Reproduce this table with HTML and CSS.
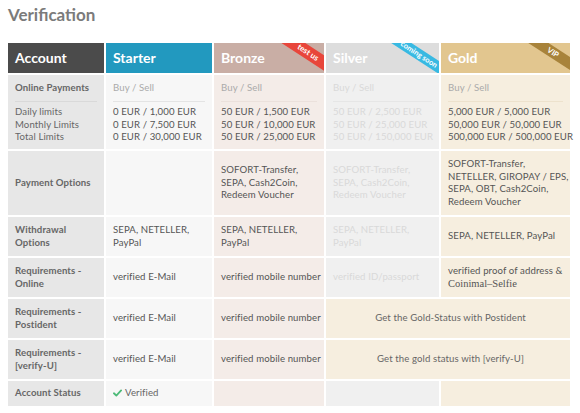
FILE: index.html
```html
<!DOCTYPE html>
<html lang="en">
<head>
<meta charset="utf-8">
<title>Verification</title>
<link rel="stylesheet" href="styles.css">
</head>
<body>
<h1 class="title">Verification</h1>
<table class="levels">
  <colgroup>
    <col class="c-account">
    <col class="c-starter">
    <col class="c-bronze">
    <col class="c-silver">
    <col class="c-gold">
  </colgroup>
  <thead>
    <tr class="row-head">
      <th class="h-account">Account</th>
      <th class="h-starter">Starter</th>
      <th class="h-bronze">Bronze<span class="ribbon r-red">test us</span></th>
      <th class="h-silver">Silver<span class="ribbon r-cyan">coming soon</span></th>
      <th class="h-gold">Gold<span class="ribbon r-brown">VIP</span></th>
    </tr>
  </thead>
  <tbody>
    <tr class="row-limits">
      <td class="label">
        <div class="top">Online Payments</div>
        <div class="lines plain">Daily limits<br>Monthly Limits<br>Total Limits</div>
      </td>
      <td class="starter">
        <div class="top muted">Buy / Sell</div>
        <div class="lines">0 EUR / 1,000 EUR<br>0 EUR / 7,500 EUR<br>0 EUR / 30,000 EUR</div>
      </td>
      <td class="bronze">
        <div class="top muted">Buy / Sell</div>
        <div class="lines">50 EUR / 1,500 EUR<br>50 EUR / 10,000 EUR<br>50 EUR / 25,000 EUR</div>
      </td>
      <td class="silver">
        <div class="top">Buy / Sell</div>
        <div class="lines">50 EUR / 2,500 EUR<br>50 EUR / 25,000 EUR<br>50 EUR / 150,000 EUR</div>
      </td>
      <td class="gold">
        <div class="top muted">Buy / Sell</div>
        <div class="lines">5,000 EUR / 5,000 EUR<br>50,000 EUR / 50,000 EUR<br>500,000 EUR / 500,000 EUR</div>
      </td>
    </tr>
    <tr class="row-pay">
      <td class="label">Payment Options</td>
      <td class="starter"></td>
      <td class="bronze">SOFORT-Transfer,<br>SEPA, Cash2Coin,<br>Redeem Voucher</td>
      <td class="silver">SOFORT-Transfer,<br>SEPA, Cash2Coin,<br>Redeem Voucher</td>
      <td class="gold">SOFORT-Transfer,<br>NETELLER, GIROPAY / EPS,<br>SEPA, OBT, Cash2Coin,<br>Redeem Voucher</td>
    </tr>
    <tr class="row-std">
      <td class="label">Withdrawal<br>Options</td>
      <td class="starter">SEPA, NETELLER,<br>PayPal</td>
      <td class="bronze">SEPA, NETELLER,<br>PayPal</td>
      <td class="silver">SEPA, NETELLER,<br>PayPal</td>
      <td class="gold">SEPA, NETELLER, PayPal</td>
    </tr>
    <tr class="row-std">
      <td class="label">Requirements -<br>Online</td>
      <td class="starter">verified E-Mail</td>
      <td class="bronze">verified mobile number</td>
      <td class="silver">verified ID/passport</td>
      <td class="gold">verified proof of address &amp;<br><span class="serif">Coinimal–Selfie</span></td>
    </tr>
    <tr class="row-std">
      <td class="label">Requirements -<br>Postident</td>
      <td class="starter">verified E-Mail</td>
      <td class="bronze">verified mobile number</td>
      <td class="gold merged" colspan="2">Get the Gold-Status with Postident</td>
    </tr>
    <tr class="row-std">
      <td class="label">Requirements -<br>[verify-U]</td>
      <td class="starter">verified E-Mail</td>
      <td class="bronze">verified mobile number</td>
      <td class="gold merged" colspan="2">Get the gold status with [verify-U]</td>
    </tr>
    <tr class="row-status">
      <td class="label">Account Status</td>
      <td class="starter"><span class="status"><svg class="check" viewBox="0 0 10 8" width="9" height="8"><path d="M1 4.3 L3.7 6.8 L9 1.2" fill="none" stroke="#4cba78" stroke-width="2" stroke-linecap="round" stroke-linejoin="round"/></svg>Verified</span></td>
      <td class="bronze"></td>
      <td class="silver"></td>
      <td class="gold"></td>
    </tr>
  </tbody>
</table>
</body>
</html>
```

FILE: styles.css
```css
html, body {
  margin: 0;
  padding: 0;
  background: #ffffff;
}

body {
  padding: 0 8px;
  font-family: Lato, "Open Sans", "Liberation Sans", sans-serif;
  color: #555555;
}

.title {
  margin: 0;
  padding-top: 3px;
  font-size: 17px;
  line-height: 23px;
  font-weight: 700;
  color: #7b7b7b;
}

.levels {
  margin: 15px 0 0 -2px;
  width: 566px;
  table-layout: fixed;
  border-collapse: separate;
  border-spacing: 2px;
  font-size: 9.6px;
  letter-spacing: 0.1px;
  line-height: 12.5px;
}

.c-account { width: 96px; }
.c-starter { width: 106px; }
.c-bronze { width: 110px; }
.c-silver { width: 113px; }
.c-gold { width: 129px; }

.levels th,
.levels td {
  padding: 0 2px 0 7px;
  text-align: left;
  vertical-align: middle;
  white-space: nowrap;
}

.levels th {
  position: relative;
  overflow: hidden;
  height: 30px;
  font-size: 14px;
  letter-spacing: 0;
  font-weight: 700;
  color: #ffffff;
}

.h-account { background: #4b4b4b; }
.h-starter { background: #2299bf; }
.h-bronze { background: #c9aea5; }
.h-silver { background: #dddddd; }
.h-gold { background: #e2c68f; }

.ribbon {
  position: absolute;
  width: 100px;
  height: 11px;
  line-height: 11px;
  font-size: 7.5px;
  font-weight: 700;
  text-align: center;
  color: #ffffff;
  white-space: nowrap;
  transform: rotate(33deg);
}

.r-red {
  background: #e8463b;
  height: 13px;
  line-height: 13px;
  font-size: 8px;
  right: -34px;
  top: 3px;
}

.r-cyan {
  background: #38b9e2;
  right: -30px;
  top: 6px;
}

.r-brown {
  background: #a8833a;
  right: -33px;
  top: 4px;
}

.label {
  background: #e7e7e7;
  color: #666666;
  font-weight: 700;
}

.label .plain {
  font-weight: 400;
}

.starter { background: #f7f7f7; }
.bronze { background: #f4ece8; }
.silver { background: #f0f0f0; color: #d9d9d9; }
.gold { background: #f6eedf; }

.muted { color: #aaaaaa; }

.row-limits td {
  vertical-align: top;
  height: 74px;
}

.row-limits .top {
  height: 26px;
  line-height: 26px;
  margin-right: 5px;
  border-bottom: 1px solid #e4e4e4;
}

.row-limits .label .top { border-bottom-color: #d9d9d9; }
.row-limits .bronze .top { border-bottom-color: #ebe1dc; }
.row-limits .silver .top { border-bottom-color: #e6e6e6; }
.row-limits .gold .top { border-bottom-color: #ede2cd; }

.row-limits .lines {
  padding-top: 4px;
}

.row-pay td { height: 64px; }
.row-std td { height: 39px; }
.row-status td { height: 25px; }

.merged {
  text-align: center !important;
  color: #666666;
}

.serif {
  font-family: "Liberation Serif", serif;
  font-size: 10.5px;
  letter-spacing: 0;
}

.status {
  display: inline-flex;
  align-items: center;
  gap: 3px;
  color: #666666;
}

.check {
  display: block;
}
```
